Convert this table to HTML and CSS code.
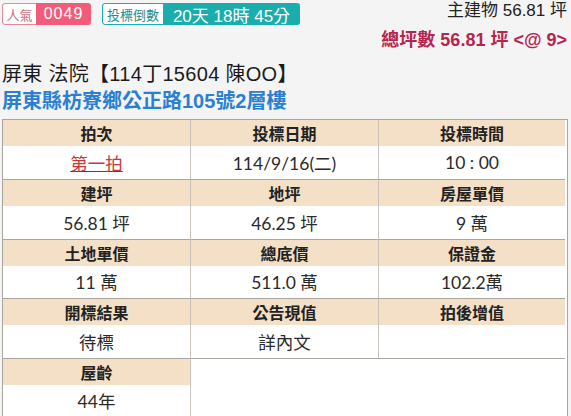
FILE: index.html
```html
<!DOCTYPE html>
<html lang="zh-Hant">
<head>
<meta charset="utf-8">
<link rel="stylesheet" href="styles.css">
</head>
<body>
<div class="top">
  <div class="badges">
    <div class="badge pink">
      <span class="label">人氣</span><span class="value">0049</span>
    </div>
    <div class="badge teal">
      <span class="label">投標倒數</span><span class="value">20天 18時 45分</span>
    </div>
  </div>
  <div class="area">
    <div class="main">主建物 56.81 坪</div>
    <div class="total">總坪數 56.81 坪 &lt;@ 9&gt;</div>
  </div>
</div>
<div class="title">屏東 法院【114丁15604 陳OO】</div>
<div class="addr">屏東縣枋寮鄉公正路105號2層樓</div>
<div class="box">
  <div class="grid">
    <div class="th">拍次</div><div class="th">投標日期</div><div class="th">投標時間</div>
    <div class="td"><a class="round">第一拍</a></div><div class="td">114/9/16(二)</div><div class="td">10 : 00</div>
    <div class="th">建坪</div><div class="th">地坪</div><div class="th">房屋單價</div>
    <div class="td">56.81 坪</div><div class="td">46.25 坪</div><div class="td">9 萬</div>
    <div class="th">土地單價</div><div class="th">總底價</div><div class="th">保證金</div>
    <div class="td">11 萬</div><div class="td">511.0 萬</div><div class="td">102.2萬</div>
    <div class="th">開標結果</div><div class="th">公告現值</div><div class="th">拍後增值</div>
    <div class="td">待標</div><div class="td">詳內文</div><div class="td"></div>
    <div class="th">屋齡</div><div class="blank"></div><div class="blank"></div>
    <div class="td last">44年</div><div class="blank"></div><div class="blank"></div>
  </div>
</div>
</body>
</html>
```

FILE: styles.css
```css
html, body {
  margin: 0;
  padding: 0;
  background: #f4f4f4;
  font-family: "Liberation Sans", "Noto Sans CJK TC", sans-serif;
  color: #222;
  overflow: hidden;
}

.top {
  display: flex;
  justify-content: space-between;
  align-items: flex-start;
  padding: 0 4px 0 2px;
  height: 51px;
}

.badges {
  display: flex;
  gap: 11px;
  margin-top: 3px;
}

.badge {
  display: flex;
  height: 22px;
  border-radius: 3px;
  overflow: hidden;
  box-sizing: border-box;
}

.badge .label {
  display: flex;
  align-items: center;
  justify-content: center;
  background: #fff;
  font-family: "Noto Sans CJK TC", sans-serif;
  font-size: 13px;
  box-sizing: border-box;
  border-radius: 3px 0 0 3px;
}

.badge .value {
  display: flex;
  align-items: center;
  justify-content: center;
  color: #fff;
}

.pink .label {
  width: 34px;
  border: 1px solid #e58a9a;
  border-right: none;
  color: #c9707e;
}

.pink .value {
  width: 55px;
  background: #f25c78;
  font-size: 16px;
  letter-spacing: 1px;
}

.teal .label {
  width: 61px;
  border: 1px solid #1aaeb0;
  border-right: none;
  color: #1f8c8e;
}

.teal .value {
  width: 137px;
  background: #19adae;
  font-size: 17px;
}

.area {
  text-align: right;
}

.main {
  font-size: 17px;
  line-height: 22px;
  color: #222;
}

.total {
  margin-top: 7px;
  font-size: 18px;
  line-height: 22px;
  font-weight: bold;
  color: #b7244e;
}

.title {
  padding-left: 2px;
  font-size: 20px;
  line-height: 27px;
  color: #1a1a1a;
  margin-top: 10px;
  letter-spacing: 0.3px;
}

.addr {
  padding-left: 2px;
  font-size: 20px;
  font-weight: bold;
  line-height: 27px;
  color: #2a7fd0;
}

.box {
  margin: 4px 0 0 2px;
  width: 566px;
  box-sizing: border-box;
  background: #fff;
  border: 1px solid #a9a59f;
  border-bottom: none;
  height: 300px;
}

.grid {
  display: grid;
  grid-template-columns: 188px 188px 186px;
  grid-template-rows: 26px 33.75px 26px 33.75px 26px 33.75px 26px 33.75px 26px 60px;
  font-family: "Lato", "Noto Sans CJK TC", sans-serif;
}

.th {
  display: flex;
  align-items: center;
  justify-content: center;
  background: #f4dfc7;
  font-family: "Noto Sans CJK TC", sans-serif;
  font-size: 16px;
  font-weight: bold;
  color: #222;
  border-right: 1px solid #c8c2ba;
}

.td {
  box-sizing: border-box;
  display: flex;
  align-items: center;
  justify-content: center;
  font-size: 17.5px;
  font-weight: 400;
  color: #2a2a2a;
  border-right: 1px solid #c8c2ba;
  border-bottom: 1px solid #a9a59f;
}

.th:nth-child(3n), .td:nth-child(3n) {
  border-right: none;
}

.td.last {
  align-items: flex-start;
  padding-top: 3px;
  border-bottom: none;
}

.round {
  color: #c7383c;
  text-decoration: underline;
  text-decoration-color: #8a2a2c;
}
```
